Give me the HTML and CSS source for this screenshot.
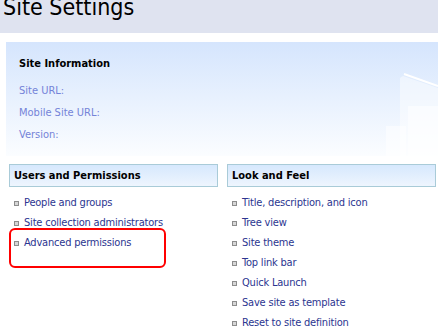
FILE: index.html
```html
<!DOCTYPE html>
<html lang="en">
<head>
    <meta charset="UTF-8">
    <title>Site Settings</title>
    <link rel="stylesheet" href="styles.css">
</head>
<body>
    <div class="title-bar">
        <h1>Site Settings</h1>
    </div>

    <div class="info-panel">
        <svg class="info-art" width="60" height="90" viewBox="0 0 60 90">
            <polygon points="25,10 60,22 60,90 22,90 22,12" fill="#ffffff" fill-opacity="0.45"/>
            <line x1="26" y1="8" x2="60" y2="20" stroke="#ffffff" stroke-width="2"/>
            <rect x="30" y="40" width="30" height="50" fill="#ffffff" fill-opacity="0.5"/>
            <rect x="8" y="60" width="20" height="30" fill="#ffffff" fill-opacity="0.5"/>
        </svg>
        <h3>Site Information</h3>
        <div class="info-row">Site URL:</div>
        <div class="info-row">Mobile Site URL:</div>
        <div class="info-row">Version:</div>
    </div>

    <div class="columns">
        <div class="section">
            <div class="section-head">Users and Permissions</div>
            <ul class="links">
                <li><a href="#">People and groups</a></li>
                <li><a href="#">Site collection administrators</a></li>
                <li class="marked"><a href="#">Advanced permissions</a></li>
            </ul>
        </div>
        <div class="section">
            <div class="section-head">Look and Feel</div>
            <ul class="links">
                <li><a href="#">Title, description, and icon</a></li>
                <li><a href="#">Tree view</a></li>
                <li><a href="#">Site theme</a></li>
                <li><a href="#">Top link bar</a></li>
                <li><a href="#">Quick Launch</a></li>
                <li><a href="#">Save site as template</a></li>
                <li><a href="#">Reset to site definition</a></li>
            </ul>
        </div>
    </div>
</body>
</html>
```

FILE: styles.css
```css
body {
    margin: 0;
    font-family: "DejaVu Sans Condensed", "DejaVu Sans", sans-serif;
    font-size: 11px;
    background: white;
    overflow: hidden;
}
.title-bar {
    height: 33px;
    background: #dfe3f0;
    overflow: hidden;
}
.title-bar h1 {
    margin: -7px 0 0 3px;
    font-size: 23px;
    font-weight: normal;
    line-height: 28px;
    color: #000;
}
.info-panel {
    position: relative;
    margin: 9px 0 0 6px;
    height: 114px;
    padding: 0 0 0 13px;
    box-sizing: border-box;
    background: linear-gradient(#d5e5fd, #fbfdff);
    overflow: hidden;
}
.info-art {
    position: absolute;
    right: 0;
    top: 24px;
}
.info-panel h3 {
    margin: 0;
    padding-top: 15px;
    font-size: 11px;
    line-height: 14px;
    color: #000;
}
.info-row {
    color: #7483d8;
    line-height: 22px;
}
.info-panel h3 + .info-row {
    margin-top: 9px;
}
.columns {
    display: flex;
    gap: 9px;
    margin: 8px 0 0 9px;
}
.section {
    width: 209px;
}
.section-head {
    height: 21px;
    line-height: 21px;
    padding-left: 4px;
    border: 1px solid #a9cbd8;
    background: linear-gradient(#d6e8fd, #eef5fe);
    font-weight: bold;
    font-size: 11px;
    color: #000;
}
.links {
    list-style: none;
    margin: 6px 0 0 0;
    padding: 0;
}
.links li {
    position: relative;
    line-height: 20px;
    padding-left: 15px;
    letter-spacing: -0.2px;
}
.links li::before {
    content: "";
    position: absolute;
    left: 5px;
    top: 8px;
    width: 3px;
    height: 3px;
    border: 1px solid #8c8c8c;
    background: #d6d6d6;
}
.links a {
    color: #2b3590;
    text-decoration: none;
}
.links li.marked::after {
    content: "";
    position: absolute;
    left: 0;
    top: -5px;
    width: 153px;
    height: 36px;
    border: 2px solid #ff0000;
    border-radius: 6px;
}
```
